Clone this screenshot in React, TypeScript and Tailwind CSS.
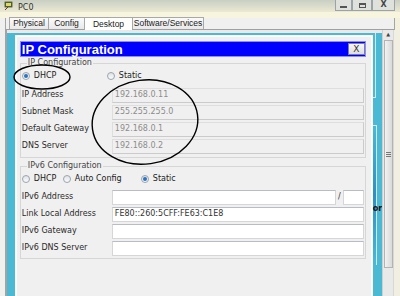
import { ReactNode } from 'react';

const tabs = [
  { name: 'Physical', w: 'w-[39px]' },
  { name: 'Config', w: 'w-[36px]' },
  { name: 'Desktop', w: 'w-[48px]' },
  { name: 'Software/Services', w: 'w-[72px]' },
];

function Radio({ checked }: { checked?: boolean }) {
  return (
    <span className="w-[8px] h-[8px] shrink-0 rounded-full border border-[#9aa4ae] bg-gradient-to-b from-[#dfe3e7] to-[#fbfbfb] flex items-center justify-center">
      {checked && <span className="w-[4px] h-[4px] rounded-full bg-[#2a72c2]" />}
    </span>
  );
}

function Field({ label, value, white, children }: { label: string; value?: string; white?: boolean; children?: ReactNode }) {
  return (
    <div className="flex items-center h-[16px]">
      <span className="w-[91px] pl-[1px] text-[8px] text-[#2a2a2a] leading-none">{label}</span>
      <div
        className={`flex-1 h-[15px] flex items-center pl-[2px] text-[8px] leading-none border ${
          white
            ? 'bg-white border-[#d6d6d6] border-t-[#b9bcc4] text-[#333]'
            : 'bg-[#f0f0f0] border-[#cbcbcb] border-t-[#dedede] border-l-[#dedede] text-[#8c8c8c]'
        }`}
      >
        {value}
      </div>
      {children}
    </div>
  );
}

function WindowButton({ children, w }: { children: ReactNode; w: string }) {
  return (
    <div className={`${w} h-[11px] border border-t-0 border-[#9ba3a8] bg-[#dfe2dc] flex items-center justify-center text-[8px] text-[#444] leading-none`}>
      {children}
    </div>
  );
}

export default function App() {
  return (
    <div className="relative w-[400px] h-[296px] overflow-hidden bg-[#f3f1dd] font-['DejaVu_Sans',sans-serif]">
      {/* title bar */}
      <div className="h-[12px] flex items-start bg-gradient-to-b from-[#c9cfc3] to-[#ece9d3]">
        <div className="flex items-center h-[12px] pl-[4px] gap-[4px]">
          <svg width="10" height="10" viewBox="0 0 10 10">
            <rect x="1" y="1" width="7" height="5" fill="#2f7d3a" stroke="#5a4a1a" strokeWidth="0.8" />
            <rect x="2" y="2" width="5" height="3" fill="#e6d36a" />
            <path d="M1 9 L4 6" stroke="#7a3b1a" strokeWidth="1" />
          </svg>
          <span className="text-[8px] text-[#333] leading-none mt-[3px]">PC0</span>
        </div>
        <div className="ml-auto mr-[5px] flex">
          <WindowButton w="w-[17px]">
            <span className="block w-[7px] h-[2px] bg-[#555] mt-[3px]" />
          </WindowButton>
          <WindowButton w="w-[20px]">
            <span className="block w-[7px] h-[5px] border border-[#555] border-t-2" />
          </WindowButton>
          <WindowButton w="w-[23px]">
            <span className="font-bold">X</span>
          </WindowButton>
        </div>
      </div>
      <div className="h-[6px] bg-[#f7f5de]" />

      {/* tab bar */}
      <div className="flex h-[12px]">
        <div className="w-[5px] bg-[#f0f0ef]" />
        <div className="flex-1 flex items-end pl-[3px] bg-[#f0f0f0] border-l border-r border-[#a5a5a5] border-b border-b-[#a0a0a0] mr-[5px]">
          {tabs.map((t) => (
            <div
              key={t.name}
              className={`${t.w} h-[12px] flex items-center justify-center text-[8.5px] leading-none text-[#222] font-['Liberation_Sans',sans-serif] border border-b-0 border-r-0 last:border-r border-[#a8a8a8] ${
                t.name === 'Desktop' ? 'bg-white h-[13px] mb-[-1px]' : 'bg-gradient-to-b from-[#fafafa] to-[#e9e9e9]'
              }`}
            >
              {t.name}
            </div>
          ))}
        </div>
      </div>

      {/* content */}
      <div className="flex h-[266px]">
        <div className="w-[5px] bg-[#f0f0ef]" />
        <div className="w-[2px] bg-[#a3a3a3]" />
        <div className="flex-1 flex bg-[#4bb9d4] border-t-[3px] border-[#e9e9e9]">
          <div className="ml-[8px] mt-[2px] w-[358px] h-[300px] border-2 border-[#fbfbfb] bg-[#f0f0f0] pl-[3px] pr-[5px] pt-[4px]">
            <div className="h-[16px] bg-[#0000ff] border border-[#8c8cff] flex items-center justify-between">
              <span className="pl-[1px] text-white font-bold text-[13px] leading-none font-['Liberation_Sans',sans-serif]">
                IP Configuration
              </span>
              <div className="w-[17px] h-[12px] border border-[#7b7ba8] bg-gradient-to-b from-[#f7f7f7] to-[#dedede] flex items-center justify-center text-[9px] text-[#333] leading-none">
                X
              </div>
            </div>

            <fieldset className="mt-[1px] border border-[#d6d6d6] pb-[3px] pr-[1px]">
              <legend className="ml-[6px] px-[1px] text-[8px] leading-[10px] text-[#444]">IP Configuration</legend>
              <div className="h-[16px] flex items-center pl-[1px] text-[8px] text-[#222]">
                <Radio checked />
                <span className="ml-[4px] w-[73px]">DHCP</span>
                <Radio />
                <span className="ml-[4px]">Static</span>
              </div>
              <div className="mt-[3px] flex flex-col gap-[1px]">
                <Field label="IP Address" value="192.168.0.11" />
                <Field label="Subnet Mask" value="255.255.255.0" />
                <Field label="Default Gateway" value="192.168.0.1" />
                <Field label="DNS Server" value="192.168.0.2" />
              </div>
            </fieldset>

            <fieldset className="mt-[3px] border border-[#d6d6d6] pb-[2px] pr-[1px]">
              <legend className="ml-[6px] px-[1px] text-[8px] leading-[10px] text-[#444]">IPv6 Configuration</legend>
              <div className="h-[16px] flex items-center pl-[1px] text-[8px] text-[#222]">
                <Radio />
                <span className="ml-[4px] w-[29px]">DHCP</span>
                <Radio />
                <span className="ml-[4px] w-[66px]">Auto Config</span>
                <Radio checked />
                <span className="ml-[4px]">Static</span>
              </div>
              <div className="mt-[2px] flex flex-col gap-[1px]">
                <Field label="IPv6 Address" white>
                  <span className="w-[7px] text-center text-[8px] text-[#333]">/</span>
                  <div className="w-[21px] h-[15px] bg-white border border-[#d6d6d6] border-t-[#b9bcc4]" />
                </Field>
                <Field label="Link Local Address" value="FE80::260:5CFF:FE63:C1E8" white />
                <Field label="IPv6 Gateway" white />
                <Field label="IPv6 DNS Server" white />
              </div>
            </fieldset>
          </div>

          {/* panels behind the dialog */}
          <div className="flex-1 flex flex-col">
            <div className="h-[65px] w-[3px] border-r border-b border-[#cfeaf0]" />
            <div className="mt-[27px] h-[140px] w-[4px] border-r border-t border-[#cfeaf0] bg-gradient-to-b from-[#4bb9d4] via-[#2f8fc0] to-[#4bb9d4]" />
            <span className="-mt-[60px] text-[8px] font-bold leading-none text-[#111]">or</span>
          </div>
        </div>

        {/* scrollbar */}
        <div className="w-[11px] bg-[#e9e9e9] border-l border-[#cfcfcf] flex flex-col items-center">
          <div className="h-[9px] flex items-center text-[5px] text-[#444] leading-none">▲</div>
          <div className="w-[9px] h-[228px] mt-[1px] border border-[#b3b3b3] bg-gradient-to-r from-[#f2f2f2] to-[#d9d9d9] flex flex-col items-center justify-center gap-[1px]">
            <span className="block w-[5px] h-[1px] bg-[#777]" />
            <span className="block w-[5px] h-[1px] bg-[#777]" />
            <span className="block w-[5px] h-[1px] bg-[#777]" />
          </div>
        </div>
        <div className="w-[7px] bg-[#f1efe2] border-l border-[#d8d8d8]" />
      </div>

      {/* hand-drawn marks over the screenshot */}
      <svg className="absolute inset-0 pointer-events-none" width="400" height="296" viewBox="0 0 400 296">
        <ellipse cx="42" cy="77" rx="28" ry="12" fill="none" stroke="#000" strokeWidth="1.4" />
        <ellipse cx="145" cy="122" rx="53" ry="42" transform="rotate(-8 145 122)" fill="none" stroke="#000" strokeWidth="1.4" />
      </svg>
    </div>
  );
}
